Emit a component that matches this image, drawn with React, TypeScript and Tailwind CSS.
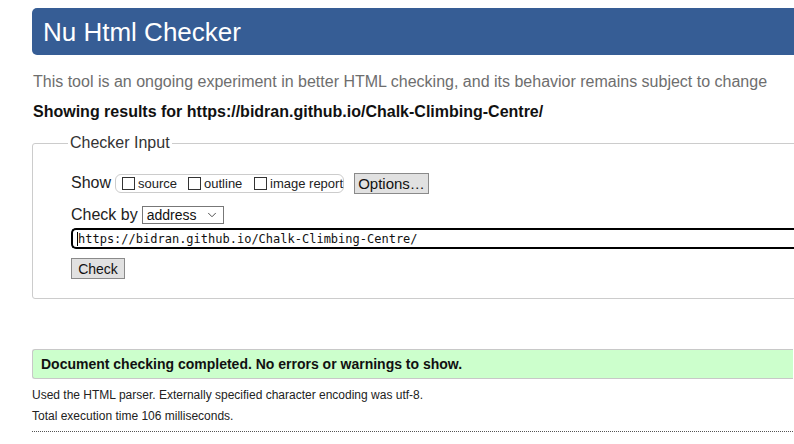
import { ChevronDown } from "lucide-react";

const sans = "font-['Liberation_Sans',Arial,sans-serif]";

function Box({ label }: { label: string }) {
  return (
    <label className="flex items-center whitespace-nowrap">
      <span className="box-border inline-block h-[13px] w-[13px] shrink-0 border border-[#333] bg-white" />
      <span className="ml-[3px] text-[13px] leading-none text-[#222]">{label}</span>
    </label>
  );
}

export default function App() {
  return (
    <div className={`${sans} h-[444px] w-[794px] overflow-hidden bg-white pl-[32px] pt-[8px] text-black`}>
      <header className="flex h-[47px] w-[800px] items-center rounded-l-[5px] bg-[#365d95] pl-[11px]">
        <h1 className="text-[26px] leading-none text-white">Nu Html Checker</h1>
      </header>

      <p className="mt-[17px] pl-px text-[16px] leading-[20px] text-[#6e6e6e]">
        This tool is an ongoing experiment in better HTML checking, and its behavior remains subject to change
      </p>
      <p className="mt-[10px] w-[800px] pl-px text-[16px] font-bold leading-[20px] text-[#111]">
        Showing results for https://bidran.github.io/Chalk-Climbing-Centre/
      </p>

      <fieldset className="mt-[11px] h-[166px] w-[800px] rounded-[3px] border border-[#ccc]">
        <legend className="ml-[35px] px-[2px] text-[16px] leading-[20px] text-[#333]">Checker Input</legend>

        <div className="pl-[38px]">
          <div className="mt-[20px] flex h-[20px] items-center">
            <span className="text-[16px] text-[#222]">Show</span>
            <div className="ml-[4px] flex h-[19px] w-[229px] items-center rounded-[6px] border border-[#ccc] pl-[6px]">
              <div className="w-[69px]"><Box label="source" /></div>
              <div className="w-[69px]"><Box label="outline" /></div>
              <Box label="image report" />
            </div>
            <button className="ml-[10px] h-[21px] w-[75px] border border-[#8a8a8a] bg-[#e1e1e1] text-[15px] leading-none text-[#111]">
              Options…
            </button>
          </div>

          <div className="mt-[12px] flex h-[20px] items-center">
            <span className="text-[16px] text-[#222]">Check by</span>
            <div className="ml-[4px] flex h-[18px] w-[82px] items-center justify-between border border-[#777] bg-white pl-[4px] pr-[4px]">
              <span className="text-[14px] leading-none text-[#111]">address</span>
              <ChevronDown className="h-[14px] w-[14px] text-[#444]" strokeWidth={1.6} />
            </div>
          </div>

          <div className="mt-[3px] flex h-[21px] w-[730px] items-center rounded-l-[5px] border-2 border-r-0 border-black pl-[4px]">
            <span className="h-[14px] w-px bg-black" />
            <span className="font-['DejaVu_Sans_Mono',monospace] text-[12px] leading-none text-[#111]">
              https://bidran.github.io/Chalk-Climbing-Centre/
            </span>
          </div>

          <button className="mt-[9px] block h-[21px] w-[54px] border border-[#8a8a8a] bg-[#e1e1e1] text-[14px] leading-none text-[#111]">
            Check
          </button>
        </div>
      </fieldset>

      <div className="mt-[50px] flex h-[30px] w-[761px] items-center rounded-l-[3px] border border-r-0 border-[#c8c8c8] bg-[#ccffcc] pl-[8px]">
        <p className="text-[14px] font-bold text-[#111]">
          Document checking completed. No errors or warnings to show.
        </p>
      </div>

      <p className="mt-[6px] text-[12px] leading-[20px] text-[#222]">
        Used the HTML parser. Externally specified character encoding was utf-8.
      </p>
      <p className="mt-[1px] text-[12px] leading-[20px] text-[#222]">Total execution time 106 milliseconds.</p>
      <div className="mt-[5px] w-[761px] border-t border-dotted border-[#555]" />
    </div>
  );
}
